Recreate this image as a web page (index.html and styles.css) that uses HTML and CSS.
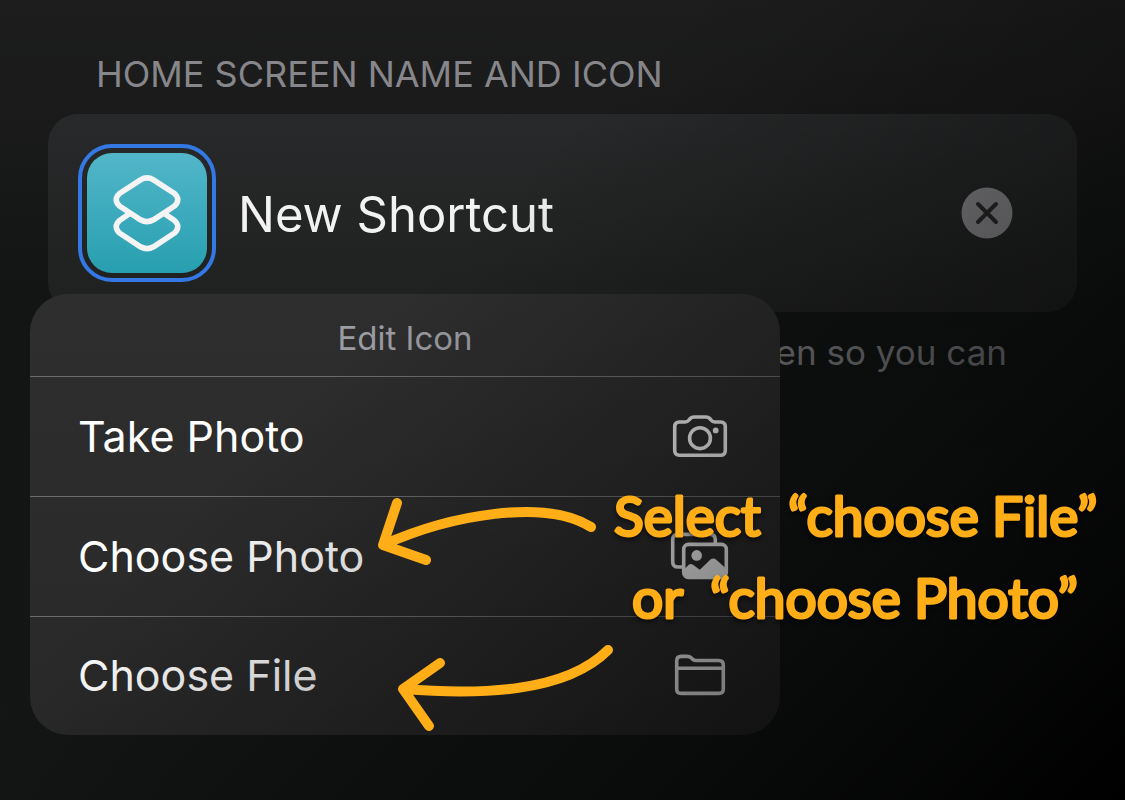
FILE: index.html
```html
<!DOCTYPE html>
<html lang="en">
<head>
	<meta charset="utf-8">
	<title>Add to Home Screen</title>
	<link rel="stylesheet" href="styles.css">
</head>
<body>
	<div class="page">
		<section class="group">
			<h2 class="groupTitle"><label for="shortcutName">HOME SCREEN NAME AND ICON</label></h2>
			<div class="card">
				<button type="button" class="appIcon" aria-label="Edit icon" aria-expanded="true">
					<svg class="appGlyph" viewBox="0 0 120 120">
						<path d="M53.5 26.8Q60 23 66.5 26.8L87.5 40.5Q94 46.5 87.5 53L66.5 66.8Q60 70.5 53.5 66.8L32.5 53Q26 46.5 32.5 40.5Z"/>
						<path d="M42 61L32.5 67.5Q26 73.5 32.5 80L53.5 93.8Q60 97.5 66.5 93.8L87.5 80Q94 73.5 87.5 67.5L78 61"/>
					</svg>
				</button>
				<input class="nameField" id="shortcutName" type="text" value="New Shortcut">
				<button type="button" class="clearBtn" aria-label="Clear name">
					<svg viewBox="0 0 52 52"><circle cx="26" cy="26" r="25.5"/><path d="M17 17L35 35M35 17L17 35"/></svg>
				</button>
			</div>
			<p class="footnote">Screen so you can</p>
		</section>

		<div class="menu" role="menu">
			<div class="menuTitle">Edit Icon</div>
			<button type="button" class="menuItem" role="menuitem">
				<span>Take Photo</span>
				<svg class="menuIcon" viewBox="0 0 60 44">
					<path d="M9.500 8H15Q17.500 8 19 6L20.500 4.300Q21.700 3 24 3H36Q38.300 3 39.500 4.300L41 6Q42.500 8 45 8H50.500Q55.300 8 55.300 12.800V36.500Q55.300 41.300 50.500 41.300H9.500Q4.700 41.300 4.700 36.500V12.800Q4.700 8 9.500 8Z"/>
					<circle cx="30" cy="24.200" r="10.400"/>
					<circle class="solid" cx="45.700" cy="16.400" r="2.900"/>
				</svg>
			</button>
			<button type="button" class="menuItem" role="menuitem">
				<span>Choose Photo</span>
				<svg class="menuIcon iconPhotos" viewBox="0 0 60 48">
					<path d="M12 35H8Q2.700 35 2.700 29.700V7.700Q2.700 2.400 8 2.400H40Q45.300 2.400 45.300 7.700V11"/>
					<rect x="13.700" y="12.400" width="42.600" height="33" rx="4.800"/>
					<circle class="solid" cx="26.700" cy="23.400" r="5.300"/>
					<path class="solid" d="M14 37.500L18.500 33Q20.800 31 23 32.700L29.800 37.800L40.500 27.600Q43.300 25.300 46 27.600L56 36.500V41Q56 46 51 46H19Q14 46 14 41Z"/>
				</svg>
			</button>
			<button type="button" class="menuItem" role="menuitem">
				<span>Choose File</span>
				<svg class="menuIcon iconFile" viewBox="0 0 60 44">
					<path d="M6.700 36V8Q6.700 3.400 11.300 3.400H17.500Q19.500 3.400 21 4.700L23 6.500Q24.300 7.500 26 7.500H48.700Q53.300 7.500 53.300 12V36Q53.300 40.400 48.700 40.400H11.300Q6.700 40.400 6.700 36ZM6.700 15.300H53.300"/>
				</svg>
			</button>
		</div>

		<div class="shade"></div>

		<!-- notes drawn on top of the menu -->
		<svg class="notes" viewBox="370 480 750 260">
			<path d="M591 527C545 498 450 515 383 545M397 503L383 545L426 560"/>
			<path d="M608 650C565 693 480 695 403 689M440 663L403 689L429 726"/>
			<text class="noteText" y="536"><tspan x="614">Select </tspan><tspan x="788">“choose </tspan><tspan x="992">File”</tspan></text>
			<text class="noteText" y="618"><tspan x="632">or </tspan><tspan x="710">“choose </tspan><tspan x="914">Photo”</tspan></text>
		</svg>
	</div>
</body>
</html>
```
FILE: styles.css
```css
*{box-sizing: border-box;}
body{
	margin: 0;
	background: #000;
	font-family: Inter, "Liberation Sans", sans-serif;
}
button,input{
	font: inherit;
	color: inherit;
	border: 0;
	padding: 0;
	margin: 0;
	background: none;
}
button{
	cursor: pointer;
}
.page{
	position: relative;
	min-height: 100vh;
	overflow: hidden;
	padding: 51px 48px;
	background: linear-gradient(#1d1d1e 0%, #1a1b1a 12%, #121514 38%, #131615 100%);
}
.groupTitle{
	margin: 0 0 17px;
	padding-left: 48px;
	font-size: 36px;
	line-height: 46px;
	font-weight: 400;
	color: #87878b;
}
.card{
	display: flex;
	align-items: center;
	gap: 22px;
	padding: 30px 64px 30px 30px;
	border-radius: 30px;
	background: linear-gradient(#28292a, #1f2120);
}
.appIcon{
	flex: none;
	width: 138px;
	height: 138px;
	padding: 5px;
	border: 4px solid #3478e4;
	border-radius: 34px;
}
.appGlyph{
	display: block;
	border-radius: 25px;
	background: linear-gradient(#52b6c9, #279fb0);
	fill: none;
	stroke: #f4f4f4;
	stroke-width: 5.6;
	stroke-linejoin: round;
}
.nameField{
	flex: 1;
	min-width: 0;
	height: 66px;
	padding-top: 3px;
	font-size: 49px;
	color: #f2f2f2;
	outline: 0;
}
.clearBtn{
	flex: none;
	width: 52px;
	height: 52px;
}
.clearBtn svg{
	display: block;
	fill: #88888b;
	stroke: #272928;
	stroke-width: 4;
	stroke-linecap: round;
}
.clearBtn circle{
	stroke: none;
}
.footnote{
	margin: 17px 0 0;
	padding-right: 70px;
	font-size: 35px;
	line-height: 46px;
	text-align: right;
	color: #7a7a7e;
}
.menu{
	position: absolute;
	left: 30px;
	top: 294px;
	width: 750px;
	border-radius: 38px;
	overflow: hidden;
	color: #fff;
	background: linear-gradient(#2e2e2e, #292929);
}
.menuTitle{
	font-size: 33px;
	line-height: 44px;
	padding: 22px 0 16px;
	text-align: center;
	color: #9c9ca3;
}
.menuItem{
	display: flex;
	align-items: center;
	justify-content: space-between;
	width: 100%;
	height: 120px;
	padding: 0 50px 2px 48px;
	border-top: 1px solid #6c6c6c;
	font-size: 43px;
	text-align: left;
}
.menuItem:last-child{
	height: 119px;
}
.menuIcon{
	width: 60px;
	height: 44px;
	fill: none;
	stroke: #f0f0f0;
	stroke-width: 3.6;
}
.iconPhotos{
	height: 48px;
}
.menuIcon .solid{
	fill: #f0f0f0;
	stroke: none;
}
/* darkens everything towards the bottom right corner */
.shade{
	position: absolute;
	inset: 0;
	pointer-events: none;
	background: linear-gradient(135deg, rgba(0,0,0,0) 36%, rgba(0,0,0,0.5) 75%, #000 100%);
}
.notes{
	position: absolute;
	left: 370px;
	top: 480px;
	width: 750px;
	height: 260px;
	fill: none;
	stroke: #ffae17;
	stroke-width: 10;
	stroke-linecap: round;
	stroke-linejoin: round;
	pointer-events: none;
}
.noteText{
	font-family: Lato, sans-serif;
	font-size: 55px;
	fill: #ffae17;
	stroke-width: 3;
	filter: drop-shadow(0 3px 2px rgba(0,0,0,0.5));
}
```
